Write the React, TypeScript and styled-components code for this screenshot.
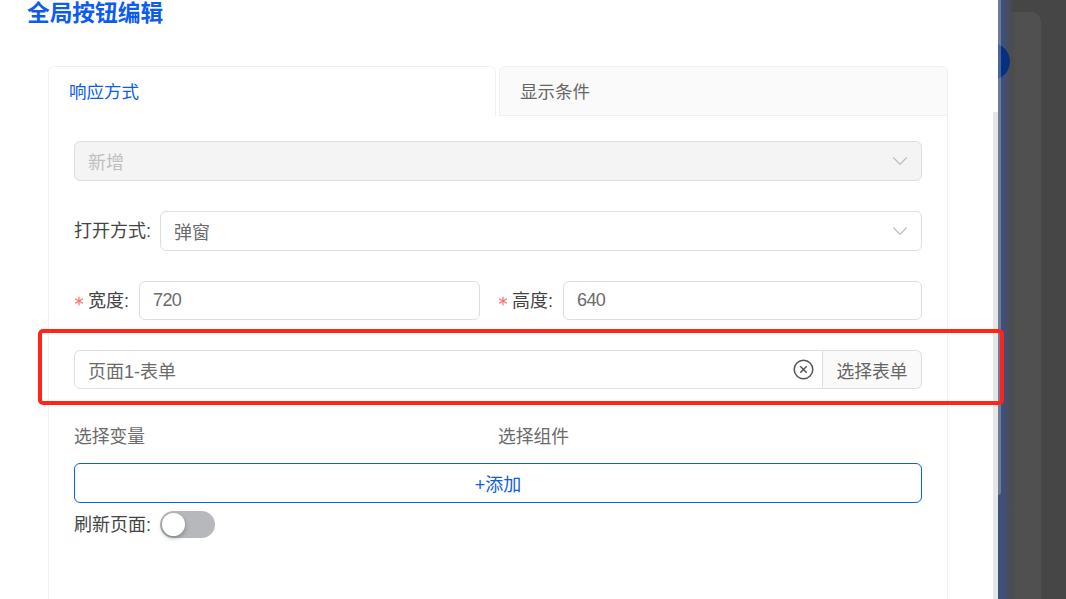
import React from 'react';
import styled, { createGlobalStyle } from 'styled-components';
import { Asterisk, ChevronDown } from 'lucide-react';

const GlobalStyle = createGlobalStyle`
  html, body {
    margin: 0;
    padding: 0;
    height: 599px;
    overflow: hidden;
    background: #fff;
    font-family: "Liberation Sans", "Noto Sans CJK SC", sans-serif;
  }
  * { box-sizing: border-box; }
`;

const Page = styled.div`
  position: relative;
  display: flex;
  width: 1066px;
  height: 599px;
  overflow: hidden;
`;

const Drawer = styled.main`
  position: relative;
  flex: 0 0 998px;
  height: 599px;
  padding: 0 50px 0 48px;
  background: #fff;
  overflow: hidden;
`;

const Title = styled.h1`
  margin: 0 0 39px -21px;
  height: 27px;
  font-size: 22.7px;
  line-height: 27px;
  font-weight: 700;
  color: #0d5cf0;
`;

const TabBar = styled.div`
  display: flex;
  gap: 3px;
  height: 50px;
`;

const Tab = styled.div<{ $active?: boolean }>`
  flex: ${(p) => (p.$active ? '0 0 448px' : '1 1 0')};
  height: 50px;
  padding: 12px 20px 0;
  font-size: 17.5px;
  line-height: 26px;
  color: ${(p) => (p.$active ? '#0d5cf0' : '#666')};
  background: ${(p) => (p.$active ? '#fff' : '#fafafa')};
  border: 1px solid #f0f0f0;
  border-bottom: ${(p) => (p.$active ? 'none' : '1px solid #f0f0f0')};
  border-radius: 6px 6px 0 0;
`;

const TabBody = styled.section`
  height: 500px;
  padding: 25px 25px 0;
  border: 1px solid #f0f0f0;
  border-top: none;
`;

const Row = styled.div<{ $gap?: number }>`
  display: flex;
  align-items: center;
  margin-bottom: ${(p) => p.$gap ?? 30}px;
`;

const SizeRow = styled.div`
  display: grid;
  grid-template-columns: 406px 1fr;
  column-gap: 18px;
  margin-bottom: 30px;
`;

const HalfField = styled.div`
  display: flex;
  align-items: center;
  min-width: 0;
`;

const Label = styled.label<{ $gap?: number }>`
  display: flex;
  align-items: center;
  flex: none;
  margin-right: ${(p) => p.$gap ?? 9}px;
  font-size: 18px;
  line-height: 24px;
  color: #444;
`;

const RequiredMark = styled(Asterisk)`
  width: 16px;
  height: 16px;
  margin: 0 1px 0 -3px;
  color: #ff6b6b;
  stroke-width: 1.8;
`;

const Field = styled.div<{ $disabled?: boolean; $height?: number; $joined?: boolean; $tight?: boolean }>`
  display: flex;
  align-items: center;
  justify-content: space-between;
  flex: 1 1 0;
  min-width: 0;
  height: ${(p) => p.$height ?? 40}px;
  padding: 0 13px;
  font-size: 18px;
  letter-spacing: ${(p) => (p.$tight ? '-0.6px' : 'normal')};
  color: ${(p) => (p.$disabled ? '#bfbfbf' : '#6b6b6b')};
  background: ${(p) => (p.$disabled ? '#f4f4f4' : '#fff')};
  border: 1px solid #dedede;
  border-radius: ${(p) => (p.$joined ? '6px 0 0 6px' : '6px')};
`;

const Chevron = styled(ChevronDown)`
  flex: none;
  width: 26px;
  height: 26px;
  margin-right: -5px;
  color: #bdbdbd;
  stroke-width: 1;
`;

const AddonButton = styled.button`
  flex: 0 0 99px;
  height: 39px;
  padding: 0;
  font: inherit;
  font-size: 17.8px;
  color: #666;
  background: #fafafa;
  border: 1px solid #dedede;
  border-left: none;
  border-radius: 0 6px 6px 0;
`;

const ClearIcon = styled.svg`
  flex: none;
  width: 21px;
  height: 21px;
  margin-right: -5px;
`;

const ColumnTitles = styled.div`
  display: grid;
  grid-template-columns: 424px 1fr;
  height: 27px;
  margin: 35px 0 12px;
  font-size: 17.8px;
  line-height: 27px;
  color: #6b6b6b;
`;

const AddButton = styled.button`
  display: block;
  width: 100%;
  height: 40px;
  padding: 0;
  font: inherit;
  font-size: 18px;
  color: #0d5cf0;
  background: #fff;
  border: 1px solid #0d5cf0;
  border-radius: 6px;
`;

const SwitchRow = styled(Row)`
  margin-top: 8px;
`;

const SwitchTrack = styled.div`
  width: 55px;
  height: 27px;
  padding: 2px;
  background: #b7b8bc;
  border-radius: 14px;
`;

const SwitchKnob = styled.div`
  width: 23px;
  height: 23px;
  background: #fff;
  border-radius: 50%;
  box-shadow: 0 2px 4px rgba(0, 35, 11, 0.35);
`;

const Scrollbar = styled.div`
  position: absolute;
  right: 0;
  top: 112px;
  bottom: 0;
  width: 5px;
  background: #e6e6e6;
`;

const Backdrop = styled.aside`
  position: relative;
  flex: 1;
  padding-top: 12px;
  background: linear-gradient(90deg, #3d4f7d 0, #3f5077 6px, #4a4c55 12px, #464646 15px);
  overflow: hidden;
`;

const BehindCard = styled.div`
  width: 43px;
  height: 100%;
  background: linear-gradient(90deg, transparent 0, transparent 9px, #505050 18px);
  border-radius: 0 10px 0 0;
`;

const BehindDot = styled.div`
  position: absolute;
  left: -25px;
  top: 43px;
  width: 37px;
  height: 37px;
  background: #08307f;
  border-radius: 50%;
`;

const EdgeBar = styled.div`
  position: absolute;
  left: 0;
  top: 0;
  width: 3px;
  height: 495px;
  background: rgba(255, 255, 255, 0.25);
  border-radius: 0 0 3px 0;
`;

const Highlight = styled.div`
  position: absolute;
  left: 38px;
  top: 329px;
  width: 966px;
  height: 76px;
  border: 4px solid #ff2418;
  border-radius: 5px;
  pointer-events: none;
`;

export default function App() {
  return (
    <Page>
      <GlobalStyle />
      <Drawer>
        <Title>全局按钮编辑</Title>
        <TabBar>
          <Tab $active>响应方式</Tab>
          <Tab>显示条件</Tab>
        </TabBar>
        <TabBody>
          <Row>
            <Field $disabled>
              新增
              <Chevron />
            </Field>
          </Row>
          <Row>
            <Label>打开方式:</Label>
            <Field>
              弹窗
              <Chevron />
            </Field>
          </Row>
          <SizeRow>
            <HalfField>
              <Label $gap={10}>
                <RequiredMark />
                宽度:
              </Label>
              <Field $height={39} $tight>720</Field>
            </HalfField>
            <HalfField>
              <Label $gap={10}>
                <RequiredMark />
                高度:
              </Label>
              <Field $height={39} $tight>640</Field>
            </HalfField>
          </SizeRow>
          <Row $gap={0}>
            <Field $height={39} $joined>
              页面1-表单
              <ClearIcon viewBox="0 0 21 21" fill="none" stroke="#555" strokeWidth="1.5">
                <circle cx="10.5" cy="10.5" r="9.3" />
                <path d="M7.3 7.3l6.4 6.4M13.7 7.3l-6.4 6.4" />
              </ClearIcon>
            </Field>
            <AddonButton>选择表单</AddonButton>
          </Row>
          <ColumnTitles>
            <span>选择变量</span>
            <span>选择组件</span>
          </ColumnTitles>
          <AddButton>+添加</AddButton>
          <SwitchRow>
            <Label>刷新页面:</Label>
            <SwitchTrack>
              <SwitchKnob />
            </SwitchTrack>
          </SwitchRow>
        </TabBody>
        <Scrollbar />
      </Drawer>
      <Backdrop>
        <BehindCard />
        <BehindDot />
        <EdgeBar />
      </Backdrop>
      <Highlight />
    </Page>
  );
}
